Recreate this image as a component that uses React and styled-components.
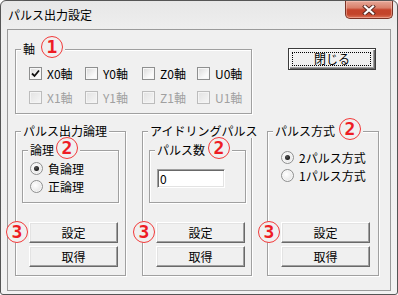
import styled, { createGlobalStyle } from "styled-components";

const GlobalStyle = createGlobalStyle`
  html, body {
    margin: 0;
    padding: 0;
    background: #fff;
  }
  body {
    font-family: "Noto Sans CJK JP", "Noto Sans", sans-serif;
    font-size: 12px;
    color: #000;
  }
`;

const Window = styled.div`
  box-sizing: border-box;
  width: 398px;
  height: 295px;
  display: flex;
  flex-direction: column;
  border: 1px solid #555;
  border-radius: 6px 6px 3px 3px;
  background: linear-gradient(#e7e7e7, #eeeeee 28px, #f2f2f2);
  overflow: hidden;
`;

const TitleBar = styled.div`
  flex: none;
  height: 28px;
  display: flex;
  align-items: flex-start;
  padding: 0 4px 0 7px;
`;

const Title = styled.span`
  margin-top: 7px;
  line-height: 14px;
  font-size: 12px;
`;

const CloseButton = styled.div`
  box-sizing: border-box;
  margin-left: auto;
  width: 48px;
  height: 18px;
  border: 1px solid #7a3326;
  border-top: none;
  border-radius: 0 0 5px 5px;
  background: linear-gradient(#e6a898 0%, #d9806b 40%, #c5432b 52%, #c3442a 78%, #dc7257 100%);
  box-shadow: inset 0 0 0 1px rgba(255, 210, 200, 0.45);
  display: flex;
  align-items: center;
  justify-content: center;
`;

const Client = styled.div`
  flex: none;
  box-sizing: border-box;
  height: 262px;
  margin: 0 6px;
  border: 1px solid #9a9a9a;
  background: #f0f0f0;
  padding: 19px 0 0 7px;
`;

const TopRow = styled.div`
  display: flex;
  align-items: flex-start;
`;

const BottomRow = styled.div`
  display: flex;
  margin-top: 17px;
`;

const GroupBox = styled.div`
  position: relative;
  box-sizing: border-box;
  flex: none;
  width: ${(p) => p.$w}px;
  height: ${(p) => p.$h}px;
  margin-left: ${(p) => p.$ml || 0}px;
  border: 1px solid #a0a0a0;
  box-shadow: 1px 1px 0 #fff, inset 1px 1px 0 #fff;
  display: flex;
  flex-direction: column;
  align-items: flex-start;
  padding: ${(p) => p.$pad || "0"};
`;

const Legend = styled.div`
  position: absolute;
  top: -8px;
  left: 5px;
  height: 14px;
  line-height: 14px;
  display: flex;
  align-items: center;
  padding: 0 2px;
  background: #f0f0f0;
  white-space: nowrap;
`;

const Badge = styled.span`
  box-sizing: border-box;
  flex: none;
  width: 22px;
  height: 22px;
  margin-left: ${(p) => (p.$gap != null ? p.$gap : 4)}px;
  border: 1px solid #f23a3a;
  border-radius: 50%;
  background: #f0f0f0;
  color: #ee1c24;
  font: bold 18px/20px "DejaVu Sans Mono", monospace;
  display: flex;
  align-items: center;
  justify-content: center;
  transform: translateY(-2px);
`;

const SideBadge = styled(Badge)`
  position: absolute;
  left: -23px;
  top: -1px;
  margin: 0;
  transform: none;
`;

const AxisGrid = styled.div`
  display: grid;
  grid-template-columns: 56px 57px 55px auto;
  row-gap: 11px;
  padding: 17px 0 0 13px;
`;

const Option = styled.label`
  display: flex;
  align-items: center;
  gap: 5px;
  height: 13px;
  line-height: 13px;
  white-space: nowrap;
  color: ${(p) => (p.$disabled ? "#a0a0a0" : "#000")};
`;

const Box = styled.span`
  box-sizing: border-box;
  flex: none;
  width: 13px;
  height: 13px;
  border: 1px solid ${(p) => (p.$disabled ? "#bcbcbc" : "#8e8f8f")};
  background: ${(p) =>
    p.$disabled
      ? "linear-gradient(135deg, #e2e2e2, #f6f6f6)"
      : "linear-gradient(135deg, #d9d9d9, #fafafa 70%)"};
  box-shadow: inset 0 0 0 1px ${(p) => (p.$disabled ? "#f4f4f4" : "#f7f7f7")};
  display: flex;
  align-items: center;
  justify-content: center;
`;

const Round = styled(Box)`
  border-radius: 50%;
  background: radial-gradient(circle at 40% 40%, #fff, #dcdcdc);
`;

const Dot = styled.span`
  width: 5px;
  height: 5px;
  border-radius: 50%;
  background: radial-gradient(circle at 40% 35%, #555, #000);
`;

const OptionStack = styled.div`
  display: flex;
  flex-direction: column;
  gap: 5px;
`;

const InnerPad = styled.div`
  padding: ${(p) => p.$pad};
`;

const ButtonStack = styled.div`
  position: relative;
  margin-top: auto;
  margin-left: ${(p) => p.$ml || 0}px;
  display: flex;
  flex-direction: column;
  gap: 3px;
`;

const Button = styled.button`
  box-sizing: border-box;
  width: 89px;
  height: 21px;
  padding: 0;
  font: 12px/14px "Noto Sans CJK JP", sans-serif;
  color: #000;
  background: #f0f0f0;
  border: 1px solid;
  border-color: #fff #696969 #696969 #fff;
  box-shadow: inset -1px -1px 0 #a0a0a0, inset 1px 1px 0 #e3e3e3;
`;

const DefaultButton = styled(Button)`
  position: relative;
  width: 88px;
  height: 22px;
  margin: -1px 0 0 36px;
  border: 1px solid #3c3c3c;
  box-shadow: inset 1px 1px 0 #fff, inset -1px -1px 0 #696969, inset -2px -2px 0 #a0a0a0;

  &::after {
    content: "";
    position: absolute;
    inset: 3px 4px 3px 3px;
    border: 1px dotted #000;
  }
`;

const NumberInput = styled.input`
  box-sizing: border-box;
  width: 68px;
  height: 19px;
  padding: 0 2px;
  border: 1px solid;
  border-color: #a0a0a0 #fff #fff #a0a0a0;
  box-shadow: inset 1px 1px 0 #696969, inset -1px -1px 0 #e3e3e3;
  background: #fff;
  font: 12px/14px "Noto Sans CJK JP", sans-serif;
  color: #000;
  outline: none;
`;

function CloseGlyph() {
  return (
    <svg width="14" height="10" viewBox="0 0 14 10">
      <path d="M3 1.5 L11 8.5 M11 1.5 L3 8.5" stroke="#5a2a22" strokeWidth="4" strokeLinecap="square" />
      <path d="M3 1.5 L11 8.5 M11 1.5 L3 8.5" stroke="#fff" strokeWidth="2.2" strokeLinecap="square" />
    </svg>
  );
}

function CheckBox({ label, checked, disabled }) {
  return (
    <Option $disabled={disabled}>
      <Box $disabled={disabled}>
        {checked && (
          <svg width="9" height="9" viewBox="0 0 9 9">
            <path d="M1 4.5 L3.5 7 L8 1.5" fill="none" stroke="#111" strokeWidth="1.8" />
          </svg>
        )}
      </Box>
      {label}
    </Option>
  );
}

function Radio({ label, checked }) {
  return (
    <Option>
      <Round>{checked && <Dot />}</Round>
      {label}
    </Option>
  );
}

function SetGetButtons({ ml }) {
  return (
    <ButtonStack $ml={ml}>
      <SideBadge>3</SideBadge>
      <Button>設定</Button>
      <Button>取得</Button>
    </ButtonStack>
  );
}

export default function App() {
  return (
    <>
      <GlobalStyle />
      <Window>
        <TitleBar>
          <Title>パルス出力設定</Title>
          <CloseButton>
            <CloseGlyph />
          </CloseButton>
        </TitleBar>
        <Client>
          <TopRow>
            <GroupBox $w={237} $h={65}>
              <Legend>
                軸<Badge $gap={6}>1</Badge>
              </Legend>
              <AxisGrid>
                <CheckBox label="X0軸" checked />
                <CheckBox label="Y0軸" />
                <CheckBox label="Z0軸" />
                <CheckBox label="U0軸" />
                <CheckBox label="X1軸" disabled />
                <CheckBox label="Y1軸" disabled />
                <CheckBox label="Z1軸" disabled />
                <CheckBox label="U1軸" disabled />
              </AxisGrid>
            </GroupBox>
            <DefaultButton>閉じる</DefaultButton>
          </TopRow>
          <BottomRow>
            <GroupBox $w={111} $h={145} $pad="18px 6px 8px">
              <Legend>パルス出力論理</Legend>
              <GroupBox $w={97} $h={53}>
                <Legend>
                  論理<Badge $gap={2}>2</Badge>
                </Legend>
                <InnerPad $pad="11px 0 0 7px">
                  <OptionStack>
                    <Radio label="負論理" checked />
                    <Radio label="正論理" />
                  </OptionStack>
                </InnerPad>
              </GroupBox>
              <SetGetButtons ml={7} />
            </GroupBox>
            <GroupBox $w={110} $h={145} $ml={16} $pad="18px 6px 8px">
              <Legend>アイドリングパルス</Legend>
              <GroupBox $w={97} $h={53}>
                <Legend>
                  パルス数<Badge $gap={3}>2</Badge>
                </Legend>
                <InnerPad $pad="18px 0 0 7px">
                  <NumberInput defaultValue="0" />
                </InnerPad>
              </GroupBox>
              <SetGetButtons ml={7} />
            </GroupBox>
            <GroupBox $w={112} $h={145} $ml={15} $pad="19px 13px 8px">
              <Legend>
                パルス方式<Badge $gap={4}>2</Badge>
              </Legend>
              <OptionStack>
                <Radio label="2パルス方式" checked />
                <Radio label="1パルス方式" />
              </OptionStack>
              <SetGetButtons ml={0} />
            </GroupBox>
          </BottomRow>
        </Client>
      </Window>
    </>
  );
}
